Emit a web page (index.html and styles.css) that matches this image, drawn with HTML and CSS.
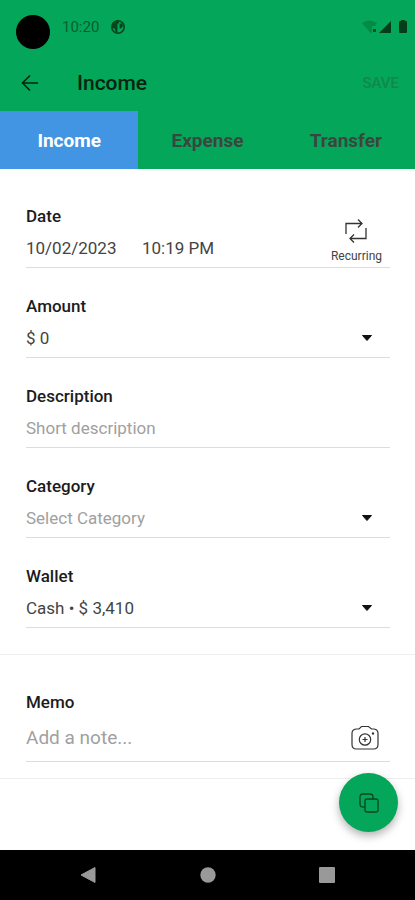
FILE: index.html
```html
<!DOCTYPE html>
<html lang="en">
<head>
    <meta charset="UTF-8">
    <meta name="viewport" content="width=device-width, initial-scale=1.0">
    <title>Income</title>
    <link rel="stylesheet" href="styles.css">
</head>
<body>
    <header>
        <div class="status-bar">
            <span class="camera-hole"></span>
            <span class="clock">10:20</span>
            <svg class="status-app" width="16" height="16" viewBox="0 0 16 16">
                <circle cx="8" cy="8" r="6.2" fill="none" stroke="#06461f" stroke-width="1.6"/>
                <path d="M2 4 L7 1.5 H9 V4.5 H7.5 V13.5 L5.5 14 L5 10 L2 8.500 Z M9.500 4.500 H12 L13 7 L11 9.500 H9.500 Z" fill="#06461f"/>
            </svg>
            <div class="status-right">
                <svg width="16" height="14" viewBox="0 0 16 14">
                    <path d="M0 3 Q7.5 -2 15 3 L13 6 H10 V13 L8 12.5 Z" fill="#058a43"/>
                    <rect x="11" y="9" width="3" height="3" fill="#045224"/>
                </svg>
                <svg width="13" height="14" viewBox="0 0 13 14">
                    <path d="M13 1 V13 H1 Z" fill="#033d19"/>
                </svg>
                <svg class="battery" width="8" height="14" viewBox="0 0 8 14">
                    <path d="M2 0 H6 V1 H7 Q8 1 8 2 V12 Q8 13 7 13 H1 Q0 13 0 12 V2 Q0 1 1 1 H2 Z" fill="#033d19"/>
                </svg>
            </div>
        </div>
        <div class="app-bar">
            <button class="back" type="button" aria-label="Back">
                <svg width="18" height="18" viewBox="0 0 18 18" fill="none" stroke="#06240f" stroke-width="1.6">
                    <path d="M17 9 H2 M9 1.5 L1.5 9 L9 16.5"/>
                </svg>
            </button>
            <h1>Income</h1>
            <button class="save" type="submit" form="entry" disabled>SAVE</button>
        </div>
        <nav class="tabs">
            <a href="#income" class="tab active">Income</a>
            <a href="#expense" class="tab">Expense</a>
            <a href="#transfer" class="tab">Transfer</a>
        </nav>
    </header>

    <main>
        <form id="entry">
            <div class="section">
                <div class="field date-field">
                    <div class="date-side">
                        <label for="date">Date</label>
                        <div class="row">
                            <input class="date" id="date" type="text" value="10/02/2023">
                            <input class="time" type="text" value="10:19 PM" aria-label="Time">
                        </div>
                    </div>
                    <button class="recurring" type="button">
                        <svg width="24" height="24" viewBox="0 0 24 24" fill="none" stroke="#333" stroke-width="1.3">
                            <path d="M2 15 V4.500 H18 M14 0.500 L18 4.500 L14 8.500"/>
                            <path d="M22 9 V19.500 H6 M10 15.500 L6 19.500 L10 23.500"/>
                        </svg>
                        <span>Recurring</span>
                    </button>
                </div>
                <div class="field">
                    <label for="amount">Amount</label>
                    <div class="picker">
                        <select id="amount"><option>$ 0</option></select>
                        <svg width="10" height="6" viewBox="0 0 10 6"><path d="M0.500 0.500 H9.500 L5 5.500 Z" fill="#111" stroke="#111" stroke-linejoin="round"/></svg>
                    </div>
                </div>
                <div class="field">
                    <label for="description">Description</label>
                    <input id="description" type="text" placeholder="Short description">
                </div>
                <div class="field">
                    <label for="category">Category</label>
                    <div class="picker">
                        <select class="empty" id="category"><option>Select Category</option></select>
                        <svg width="10" height="6" viewBox="0 0 10 6"><path d="M0.500 0.500 H9.500 L5 5.500 Z" fill="#111" stroke="#111" stroke-linejoin="round"/></svg>
                    </div>
                </div>
                <div class="field">
                    <label for="wallet">Wallet</label>
                    <div class="picker">
                        <select id="wallet"><option>Cash • $ 3,410</option></select>
                        <svg width="10" height="6" viewBox="0 0 10 6"><path d="M0.500 0.500 H9.500 L5 5.500 Z" fill="#111" stroke="#111" stroke-linejoin="round"/></svg>
                    </div>
                </div>
            </div>
            <div class="section memo">
                <div class="field">
                    <label for="memo">Memo</label>
                    <div class="row">
                        <input id="memo" type="text" placeholder="Add a note...">
                        <button class="photo" type="button" aria-label="Add photo">
                            <svg width="28" height="26" viewBox="0 0 28 26" fill="none" stroke="#333" stroke-width="1.2">
                                <path d="M5 4 H8 L10.500 1.500 H17.500 L20.500 4 H23 Q27 4.500 27 8.500 V19.500 Q27 24 22.500 24 H5.500 Q1 24 1 19.500 V8.500 Q1 4.500 5 4 Z"/>
                                <circle cx="14" cy="14.500" r="5.700"/>
                                <path d="M14 12 V17 M11.500 14.500 H16.500"/>
                                <circle cx="22" cy="8.500" r="0.600" fill="#333"/>
                            </svg>
                        </button>
                    </div>
                </div>
            </div>
        </form>
        <button class="fab" type="button" aria-label="Duplicate">
            <svg width="20" height="20" viewBox="0 0 20 20" fill="none" stroke="#06461f" stroke-width="1.3">
                <rect x="6" y="6" width="13" height="13" rx="2"/>
                <path d="M6 14 H4 Q1 14 1 11 V4 Q1 1 4 1 H11 Q14 1 14 4 V6"/>
            </svg>
        </button>
    </main>

    <footer>
        <button type="button" aria-label="System back">
            <svg width="18" height="18" viewBox="0 0 18 18"><path d="M16 1.500 V16.500 L2 9 Z" fill="#999" stroke="#999" stroke-linejoin="round"/></svg>
        </button>
        <button type="button" aria-label="Home">
            <svg width="18" height="18" viewBox="0 0 18 18"><circle cx="9" cy="9" r="7.700" fill="#999"/></svg>
        </button>
        <button type="button" aria-label="Recent apps">
            <svg width="18" height="18" viewBox="0 0 18 18"><rect x="1" y="1" width="16" height="16" rx="1" fill="#999"/></svg>
        </button>
    </footer>
</body>
</html>
```

FILE: styles.css
```css
* { box-sizing: border-box; }

body {
    margin: 0;
    min-height: 100vh;
    display: flex;
    flex-direction: column;
    background-color: #fff;
    color: #444;
    font-family: Roboto, sans-serif;
    font-size: 17px;
}

button, input, select {
    margin: 0;
    padding: 0;
    border: none;
    border-radius: 0;
    outline: none;
    background: transparent;
    color: inherit;
    font: inherit;
}
button {
    cursor: pointer;
}
svg {
    display: block;
    flex: none;
}

header {
    background-color: #04a65a;
}

/* Status bar */
.status-bar {
    display: flex;
    align-items: flex-start;
    height: 55px;
    padding: 15px 8px 0 16px;
}
.camera-hole {
    width: 34px;
    height: 34px;
    border-radius: 50%;
    background-color: #000;
}
.clock {
    margin-left: 12px;
    color: #06602f;
    font-size: 15px;
    line-height: 24px;
}
.status-app {
    margin: 4px 0 0 11px;
}
.status-right {
    display: flex;
    margin: 5px 0 0 auto;
}
.battery {
    margin-left: 8px;
}

/* Title row */
.app-bar {
    display: flex;
    align-items: center;
    height: 56px;
    padding: 0 16px 0 21px;
}
.back {
    width: 56px;
}
h1 {
    flex: 1;
    margin: 0;
    color: #06240f;
    font-size: 21px;
    font-weight: 500;
}
.save {
    color: #128847;
    font-size: 15px;
    font-weight: 500;
}

.tabs {
    display: grid;
    grid-template-columns: repeat(3, 1fr);
    height: 58px;
}
.tab {
    display: flex;
    align-items: center;
    justify-content: center;
    color: #3b4640;
    font-size: 19px;
    font-weight: 700;
    text-decoration: none;
}
.tab.active {
    background-color: #4295e2;
    color: #fff;
}

/* Form */
main {
    flex: 1;
    position: relative;
}
.section {
    padding: 9px 25px 26px 26px;
    border-bottom: 1px solid #eee;
}
.field {
    display: flex;
    flex-direction: column;
    gap: 10px;
    padding: 28px 0 7px;
    border-bottom: 1px solid #ddd;
}
.field label {
    display: block;
    color: #1c1c1c;
    font-size: 17px;
    font-weight: 500;
    line-height: 20px;
}
.field input, .field select {
    width: 100%;
    height: 24px;
    line-height: 24px;
    appearance: none;
}
.row {
    display: flex;
    align-items: center;
}
.field ::placeholder, .empty {
    color: #a0a0a0;
    opacity: 1;
}
.date-field {
    flex-direction: row;
    justify-content: space-between;
    align-items: flex-end;
    padding-bottom: 3px;
}
.date-side {
    display: flex;
    flex-direction: column;
    gap: 10px;
    padding-bottom: 4px;
}
.field .date {
    width: 116px;
}
.field .time {
    width: 90px;
}
.recurring {
    display: flex;
    flex-direction: column;
    align-items: center;
    gap: 5px;
    margin-right: 8px;
    font-size: 12px;
    line-height: 16px;
}
.picker {
    display: flex;
    align-items: center;
    padding-right: 18px;
}

.memo {
    padding-bottom: 16px;
}
.memo .row {
    height: 32px;
}
.field #memo {
    font-size: 19px;
}
.photo {
    margin-right: 11px;
}

.fab {
    position: absolute;
    right: 17px;
    bottom: 18px;
    display: flex;
    align-items: center;
    justify-content: center;
    width: 59px;
    height: 59px;
    border-radius: 50%;
    background-color: #04a65a;
    box-shadow: 0 4px 8px rgba(0, 0, 0, 0.3);
}

/* System navigation */
footer {
    display: flex;
    justify-content: space-between;
    align-items: center;
    height: 50px;
    padding: 0 79px;
    background-color: #000;
}
```
